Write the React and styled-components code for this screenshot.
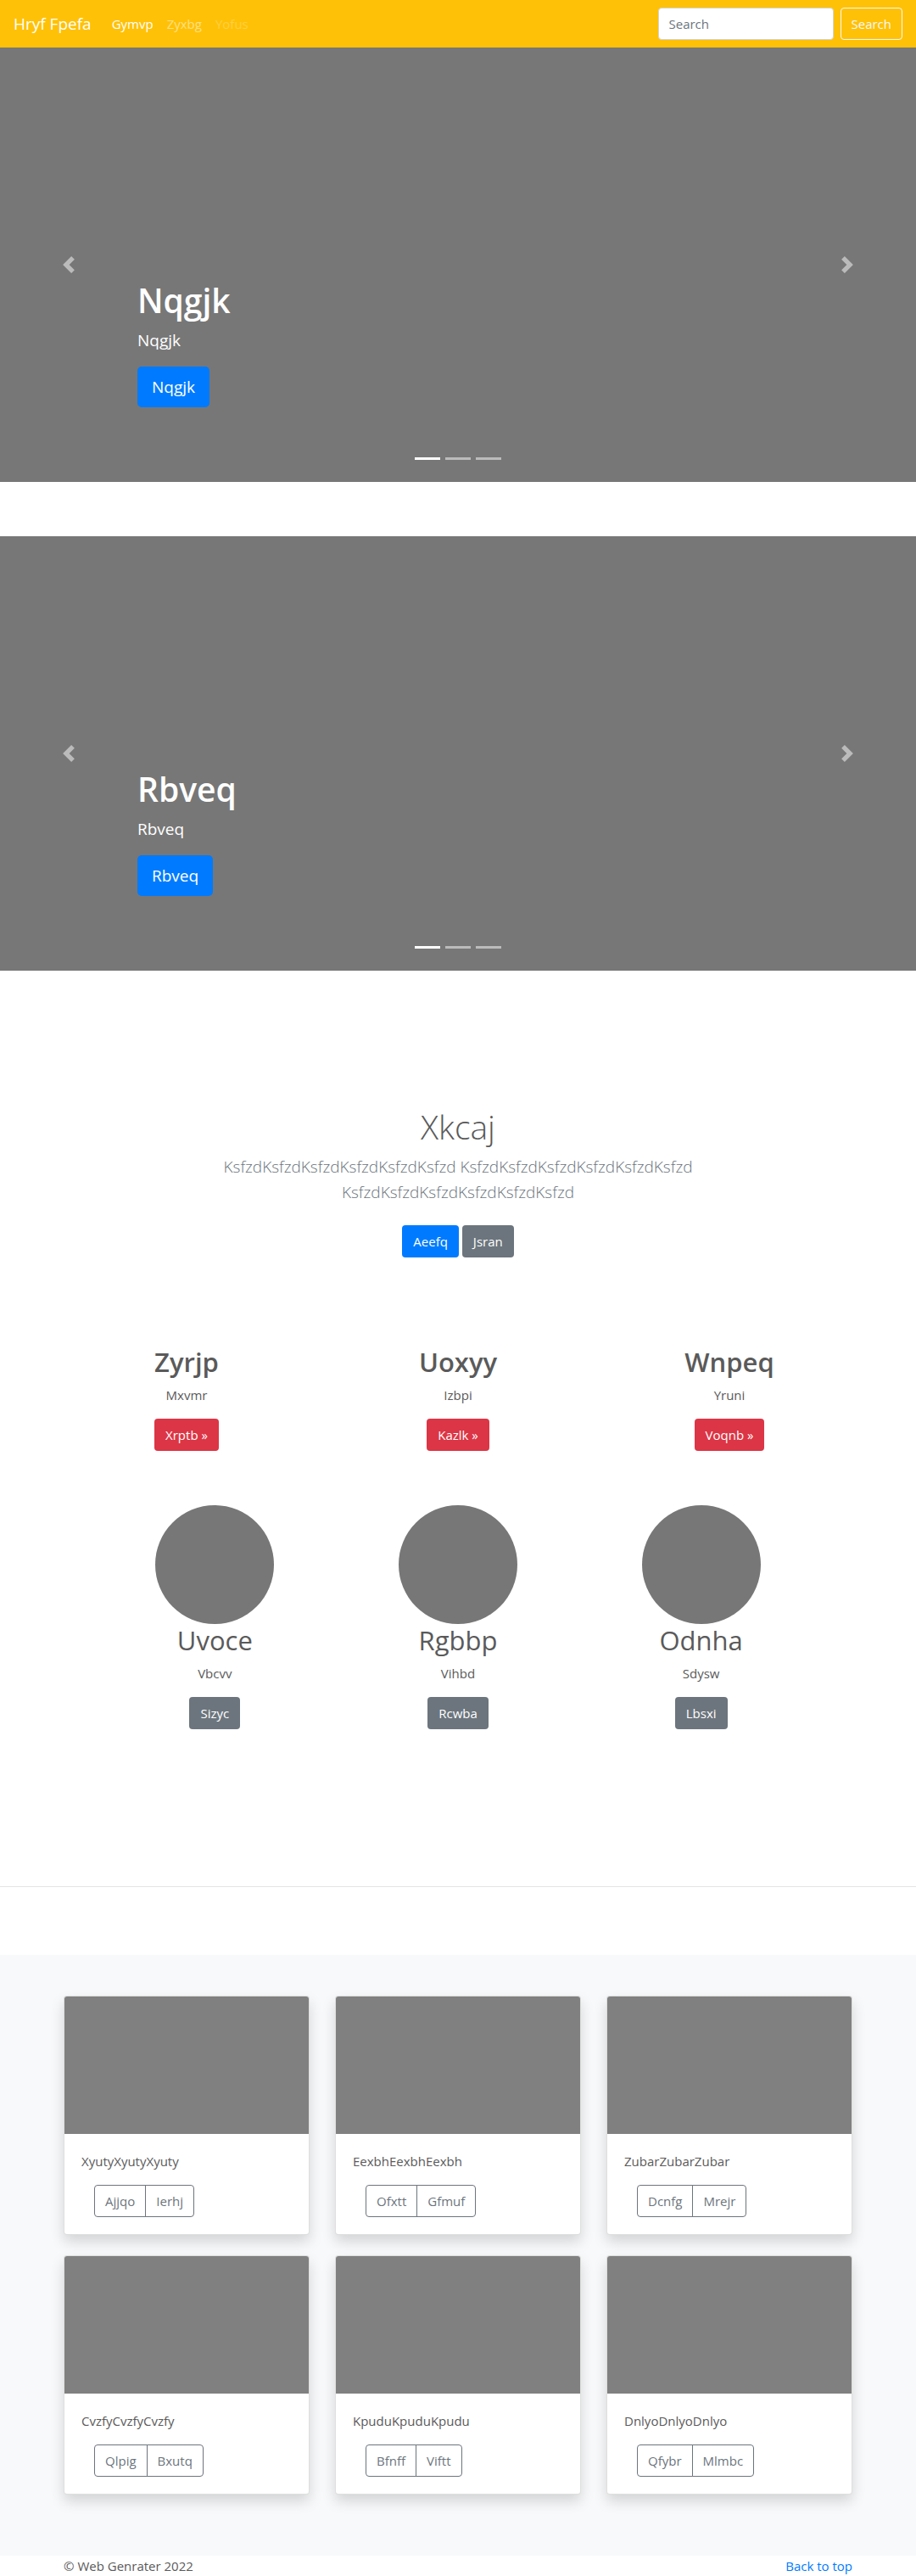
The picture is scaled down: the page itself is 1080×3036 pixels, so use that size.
import React from "react";
import styled, { createGlobalStyle, css } from "styled-components";

const GlobalStyle = createGlobalStyle`
  *, *::before, *::after { box-sizing: border-box; }
  body {
    margin: 0;
    background: #fff;
    color: #5a5a5a;
    font-family: "Open Sans", "Noto Sans", sans-serif;
    font-size: 15px;
    line-height: 24px;
  }
  h1, h2, p { margin: 0; }
  a { text-decoration: none; }
`;

const variants = {
  primary: "#007bff",
  secondary: "#6c757d",
  danger: "#dc3545",
};

const buttonBase = css`
  display: inline-block;
  padding: 6px 12px;
  border: 1px solid transparent;
  border-radius: 4px;
  font: inherit;
  line-height: 24px;
  text-align: center;
  white-space: nowrap;
  cursor: pointer;
`;

const ButtonLink = styled.a`
  ${buttonBase}
  color: #fff;
  background: ${(p) => variants[p.$variant]};
  ${(p) =>
    p.$large &&
    css`
      padding: 8px 16px;
      font-size: 19px;
      line-height: 30px;
      border-radius: 5px;
    `}
`;

const Navbar = styled.nav`
  display: flex;
  align-items: center;
  justify-content: space-between;
  height: 56px;
  padding: 0 16px;
  background: #ffc107;
`;

const NavStart = styled.div`
  display: flex;
  align-items: center;
`;

const Brand = styled.a`
  margin-right: 16px;
  color: #fff;
  font-size: 19px;
  line-height: 30px;
`;

const NavLinks = styled.ul`
  display: flex;
  margin: 0;
  padding: 0;
  list-style: none;
`;

const NavLink = styled.a`
  display: block;
  padding: 8px;
  color: rgba(255, 255, 255, ${(p) => p.$alpha});
`;

const SearchForm = styled.form`
  display: flex;
  gap: 8px;
`;

const SearchInput = styled.input`
  width: 207px;
  height: 38px;
  padding: 6px 12px;
  border: 1px solid #ced4da;
  border-radius: 4px;
  background: #fff;
  color: #495057;
  font: inherit;
  &::placeholder {
    color: #6c757d;
    opacity: 1;
  }
`;

const SearchButton = styled.button`
  ${buttonBase}
  color: #f8f9fa;
  border-color: #f8f9fa;
  background: transparent;
`;

const CarouselBox = styled.section`
  position: relative;
  display: flex;
  flex-direction: column;
  justify-content: flex-end;
  height: 512px;
  margin-bottom: 64px;
  padding: 0 15% 88px;
  background: #777;
  color: #fff;
`;

const CarouselTitle = styled.h1`
  margin-bottom: 8px;
  font-size: 39px;
  font-weight: 600;
  line-height: 48px;
`;

const CarouselText = styled.p`
  margin-bottom: 16px;
  font-size: 19px;
  line-height: 30px;
`;

const CarouselControl = styled.button`
  position: absolute;
  top: 0;
  bottom: 0;
  ${(p) => p.$side}: 0;
  display: flex;
  align-items: center;
  justify-content: center;
  width: 15%;
  padding: 0;
  border: 0;
  background: none;
  opacity: 0.5;
  cursor: pointer;
`;

const Indicators = styled.div`
  position: absolute;
  right: 0;
  bottom: 26px;
  left: 0;
  display: flex;
  justify-content: center;
  gap: 6px;
`;

const Indicator = styled.button`
  width: 30px;
  height: 3px;
  padding: 0;
  border: 0;
  background: #fff;
  opacity: ${(p) => (p.$active ? 1 : 0.5)};
  cursor: pointer;
`;

const Container = styled.div`
  max-width: 960px;
  margin: 0 auto;
`;

const Intro = styled.section`
  max-width: 640px;
  margin: 0 auto;
  padding: 96px 15px 104px;
  text-align: center;
`;

const IntroTitle = styled.h1`
  margin-bottom: 8px;
  font-size: 39px;
  font-weight: 300;
  line-height: 48px;
`;

const Lead = styled.p`
  margin-bottom: 24px;
  color: #6c757d;
  font-size: 19px;
  font-weight: 300;
  line-height: 30px;
`;

const ButtonPair = styled.div`
  display: flex;
  justify-content: center;
  gap: 4px;
`;

const FeatureRow = styled.div`
  display: grid;
  grid-template-columns: repeat(3, 1fr);
  padding: 0 ${(p) => (p.$inset ? 50 : 0)}px;
  margin-bottom: ${(p) => (p.$inset ? 0 : 64)}px;
`;

const Feature = styled.article`
  display: flex;
  flex-direction: column;
  align-items: center;
`;

const Circle = styled.div`
  width: 140px;
  height: 140px;
  border-radius: 50%;
  background: #777;
`;

const FeatureTitle = styled.h2`
  margin-bottom: 8px;
  font-size: 31px;
  font-weight: ${(p) => (p.$strong ? 600 : 400)};
  line-height: 38px;
`;

const FeatureText = styled.p`
  margin-bottom: 16px;
`;

const Divider = styled.hr`
  margin: 185px 0 80px;
  border: 0;
  border-top: 1px solid rgba(0, 0, 0, 0.1);
`;

const Album = styled.section`
  padding: 48px 15px 72px;
  background: #f8f9fa;
`;

const CardGrid = styled.div`
  display: grid;
  grid-template-columns: repeat(3, 1fr);
  gap: 24px 30px;
  max-width: 930px;
  margin: 0 auto;
`;

const Card = styled.article`
  border: 1px solid rgba(0, 0, 0, 0.125);
  border-radius: 4px;
  background: #fff;
  background-clip: border-box;
  box-shadow: 0 8px 16px rgba(0, 0, 0, 0.15);
`;

const CardImage = styled.div`
  height: 162px;
  border-radius: 3px 3px 0 0;
  background: #808080;
`;

const CardBody = styled.div`
  padding: 20px;
`;

const CardText = styled.p`
  margin-bottom: 16px;
`;

const ButtonGroup = styled.div`
  display: flex;
  margin-left: 15px;
`;

const GroupButton = styled.button`
  ${buttonBase}
  color: #6c757d;
  border-color: #6c757d;
  background: transparent;
  &:first-child {
    border-radius: 4px 0 0 4px;
  }
  &:last-child {
    margin-left: -1px;
    border-radius: 0 4px 4px 0;
  }
`;

const Footer = styled.footer`
  display: flex;
  justify-content: space-between;
  padding: 0 15px;
`;

const TopLink = styled.a`
  color: #007bff;
`;

const chevrons = {
  left: "M5.25 0l-4 4 4 4 1.5-1.5-2.5-2.5 2.5-2.5-1.5-1.5z",
  right: "M2.75 0l-1.5 1.5 2.5 2.5-2.5 2.5 1.5 1.5 4-4-4-4z",
};

function Chevron({ side }) {
  return (
    <svg width="20" height="20" viewBox="0 0 8 8" fill="#fff" aria-hidden="true">
      <path d={chevrons[side]} />
    </svg>
  );
}

function Carousel({ label }) {
  return (
    <CarouselBox>
      <CarouselTitle>{label}</CarouselTitle>
      <CarouselText>{label}</CarouselText>
      <div>
        <ButtonLink href="#" $variant="primary" $large>
          {label}
        </ButtonLink>
      </div>
      <CarouselControl type="button" $side="left" aria-label="Previous">
        <Chevron side="left" />
      </CarouselControl>
      <CarouselControl type="button" $side="right" aria-label="Next">
        <Chevron side="right" />
      </CarouselControl>
      <Indicators>
        {[1, 2, 3].map((n) => (
          <Indicator key={n} type="button" $active={n === 1} aria-label={`Slide ${n}`} />
        ))}
      </Indicators>
    </CarouselBox>
  );
}

const navLinks = [
  { label: "Gymvp", alpha: 1 },
  { label: "Zyxbg", alpha: 0.5 },
  { label: "Yofus", alpha: 0.25 },
];

const features = [
  { title: "Zyrjp", text: "Mxvmr", action: "Xrptb »" },
  { title: "Uoxyy", text: "Izbpi", action: "Kazlk »" },
  { title: "Wnpeq", text: "Yruni", action: "Voqnb »" },
];

const profiles = [
  { title: "Uvoce", text: "Vbcvv", action: "Sizyc" },
  { title: "Rgbbp", text: "Vihbd", action: "Rcwba" },
  { title: "Odnha", text: "Sdysw", action: "Lbsxi" },
];

const cards = [
  { text: "XyutyXyutyXyuty", actions: ["Ajjqo", "Ierhj"] },
  { text: "EexbhEexbhEexbh", actions: ["Ofxtt", "Gfmuf"] },
  { text: "ZubarZubarZubar", actions: ["Dcnfg", "Mrejr"] },
  { text: "CvzfyCvzfyCvzfy", actions: ["Qlpig", "Bxutq"] },
  { text: "KpuduKpuduKpudu", actions: ["Bfnff", "Viftt"] },
  { text: "DnlyoDnlyoDnlyo", actions: ["Qfybr", "Mlmbc"] },
];

export default function App() {
  return (
    <>
      <GlobalStyle />
      <Navbar>
        <NavStart>
          <Brand href="#">Hryf Fpefa</Brand>
          <NavLinks>
            {navLinks.map((l) => (
              <li key={l.label}>
                <NavLink href="#" $alpha={l.alpha}>
                  {l.label}
                </NavLink>
              </li>
            ))}
          </NavLinks>
        </NavStart>
        <SearchForm onSubmit={(e) => e.preventDefault()}>
          <SearchInput type="text" placeholder="Search" aria-label="Search" />
          <SearchButton type="submit">Search</SearchButton>
        </SearchForm>
      </Navbar>
      <main>
        <Carousel label="Nqgjk" />
        <Carousel label="Rbveq" />
        <Intro>
          <IntroTitle>Xkcaj</IntroTitle>
          <Lead>
            KsfzdKsfzdKsfzdKsfzdKsfzdKsfzd KsfzdKsfzdKsfzdKsfzdKsfzdKsfzd
            KsfzdKsfzdKsfzdKsfzdKsfzdKsfzd
          </Lead>
          <ButtonPair>
            <ButtonLink href="#" $variant="primary">
              Aeefq
            </ButtonLink>
            <ButtonLink href="#" $variant="secondary">
              Jsran
            </ButtonLink>
          </ButtonPair>
        </Intro>
        <Container>
          <FeatureRow>
            {features.map((f) => (
              <Feature key={f.title}>
                <FeatureTitle $strong>{f.title}</FeatureTitle>
                <FeatureText>{f.text}</FeatureText>
                <ButtonLink href="#" $variant="danger">
                  {f.action}
                </ButtonLink>
              </Feature>
            ))}
          </FeatureRow>
          <FeatureRow $inset>
            {profiles.map((f) => (
              <Feature key={f.title}>
                <Circle />
                <FeatureTitle>{f.title}</FeatureTitle>
                <FeatureText>{f.text}</FeatureText>
                <ButtonLink href="#" $variant="secondary">
                  {f.action}
                </ButtonLink>
              </Feature>
            ))}
          </FeatureRow>
        </Container>
        <Divider />
        <Album>
          <CardGrid>
            {cards.map((c) => (
              <Card key={c.text}>
                <CardImage />
                <CardBody>
                  <CardText>{c.text}</CardText>
                  <ButtonGroup>
                    {c.actions.map((a) => (
                      <GroupButton key={a} type="button">
                        {a}
                      </GroupButton>
                    ))}
                  </ButtonGroup>
                </CardBody>
              </Card>
            ))}
          </CardGrid>
        </Album>
      </main>
      <Container>
        <Footer>
          <span>© Web Genrater 2022</span>
          <TopLink href="#">Back to top</TopLink>
        </Footer>
      </Container>
    </>
  );
}
